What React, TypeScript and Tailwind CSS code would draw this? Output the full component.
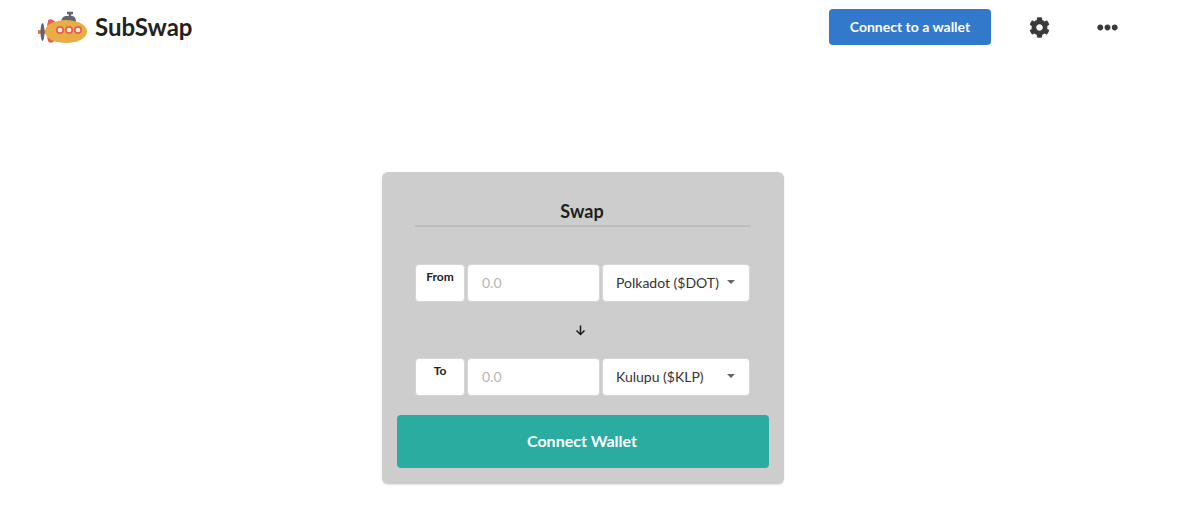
import { FaCog, FaEllipsisH } from "react-icons/fa";

// little yellow submarine from the header
function SubLogo() {
  return (
    <svg width="52" height="34" viewBox="0 0 52 34" className="shrink-0">
      <path d="M33 9V3M30 3h6" stroke="#5f6472" strokeWidth="2.400" fill="none" />
      <path d="M24 13c0-4 2-7 5-7h6c3 0 4 3 4 7z" fill="#5f6472" />
      <path d="M10 16l1-5c0-2 3-2 5-1l4 3zM10 27l1 4c1 2 3 2 5 1l4-3z" fill="#e8604c" />
      <path d="M1 22h8" stroke="#e8604c" strokeWidth="3.500" />
      <ellipse cx="5.500" cy="22" rx="2" ry="9" fill="#5f6472" />
      <ellipse cx="29" cy="21.500" rx="21" ry="11.500" fill="#e8ae45" />
      <circle cx="23" cy="20" r="3.200" fill="#fbeeda" stroke="#e8604c" strokeWidth="1.700" />
      <circle cx="32" cy="20" r="3.200" fill="#fbeeda" stroke="#e8604c" strokeWidth="1.700" />
      <circle cx="41" cy="20" r="3.200" fill="#fbeeda" stroke="#e8604c" strokeWidth="1.700" />
    </svg>
  );
}

function CaretDown() {
  return (
    <svg width="8" height="4" viewBox="0 0 8 4">
      <path d="M0 0h8L4 4z" fill="#666" />
    </svg>
  );
}

function SwapRow({ label, token }: { label: string; token: string }) {
  return (
    <div className="flex h-[38px] gap-[2px]">
      <div className="w-[50px] rounded-[4px] border border-[#d6d6d6] bg-white pt-[3px] text-center text-[12px] leading-[18px] font-bold text-[#222]">
        {label}
      </div>
      <div className="flex w-[133px] items-center rounded-[4px] border border-[#d6d6d6] bg-white pb-[2px] pl-[14px] text-[14px] text-[#b5b5b5]">
        0.0
      </div>
      <div className="flex w-[148px] items-center justify-between rounded-[4px] border border-[#d6d6d6] bg-white pr-[14px] pb-[2px] pl-[13px] text-[14px] text-[#333]">
        <span>{token}</span>
        <CaretDown />
      </div>
    </div>
  );
}

export default function App() {
  return (
    <div className="h-[532px] w-[1181px] overflow-hidden bg-white font-['Lato','Liberation_Sans',sans-serif]">
      <header className="flex h-[54px] items-center pr-[63px] pl-[37px]">
        <SubLogo />
        <span className="ml-[6px] text-[24px] leading-none font-bold text-[#222]">SubSwap</span>
        <button className="mr-[38px] ml-auto h-[36px] w-[162px] rounded-[4px] bg-[#3279cb] pb-[2px] text-[14px] font-bold text-white">
          Connect to a wallet
        </button>
        <FaCog className="text-[21px] text-[#3a3a3a]" />
        <FaEllipsisH className="ml-[47px] text-[21px] text-[#3a3a3a]" />
      </header>

      <main className="flex justify-center pt-[118px]">
        <div className="mr-[15px] h-[312px] w-[402px] rounded-[6px] bg-[#cdcdcd] px-[15px] shadow-[0_1px_2px_rgba(0,0,0,0.12)]">
          <div className="mx-[18px] h-[55px] border-b-2 border-[#bdbdbd] pt-[27px] pr-[2px] text-center text-[18px] leading-[24px] font-bold text-[#1e1e1e]">
            Swap
          </div>
          <div className="mx-[18px] mt-[37px]">
            <SwapRow label="From" token="Polkadot ($DOT)" />
            <div className="flex h-[56px] items-center justify-center pr-[6px]">
              <svg width="11" height="11" viewBox="0 0 11 11" fill="none" stroke="#1a1a1a" strokeWidth="1.500">
                <path d="M5.500 0.500v9M1.500 5.500l4 4 4-4" />
              </svg>
            </div>
            <SwapRow label="To" token="Kulupu ($KLP)" />
          </div>
          <button className="mt-[19px] h-[53px] w-full rounded-[4px] bg-[#2aaca0] pr-[2px] pb-[2px] text-[16px] font-bold text-white">
            Connect Wallet
          </button>
        </div>
      </main>
    </div>
  );
}
